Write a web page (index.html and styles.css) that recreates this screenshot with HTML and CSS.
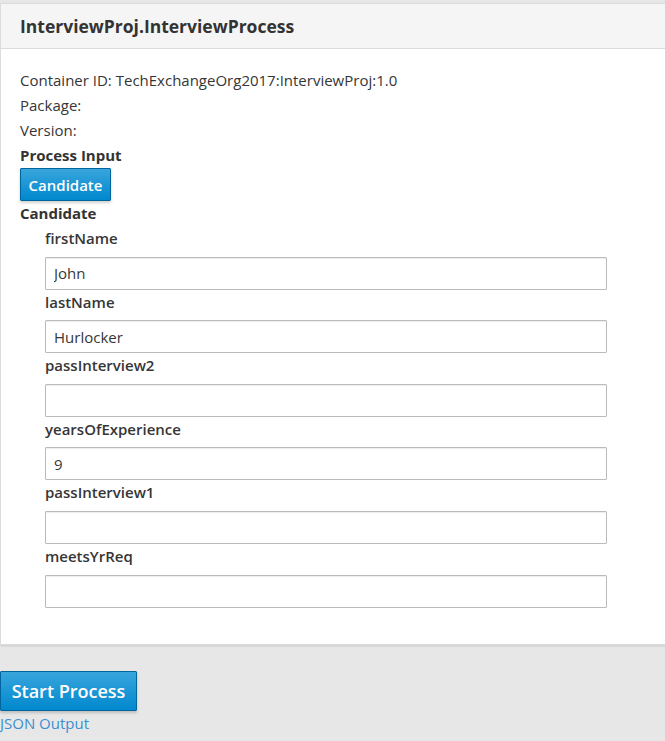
FILE: index.html
```html
<!DOCTYPE html>
<html>
<head>
<meta charset="utf-8">
<link rel="stylesheet" href="styles.css">
</head>
<body>
<div class="page">
  <div class="panel">
    <div class="panel-heading">InterviewProj.InterviewProcess</div>
    <div class="panel-body">
      <div class="line">Container ID: TechExchangeOrg2017:InterviewProj:1.0</div>
      <div class="line">Package:</div>
      <div class="line">Version:</div>
      <div class="line strong">Process Input</div>
      <button class="btn btn-small">Candidate</button>
      <div class="line strong">Candidate</div>
      <div class="fields">
        <div class="field"><label class="flabel">firstName</label><input class="input" type="text" value="John"></div>
        <div class="field"><label class="flabel">lastName</label><input class="input" type="text" value="Hurlocker"></div>
        <div class="field"><label class="flabel">passInterview2</label><input class="input" type="text" value=""></div>
        <div class="field"><label class="flabel">yearsOfExperience</label><input class="input" type="text" value="9"></div>
        <div class="field"><label class="flabel">passInterview1</label><input class="input" type="text" value=""></div>
        <div class="field"><label class="flabel">meetsYrReq</label><input class="input" type="text" value=""></div>
      </div>
    </div>
  </div>
  <div class="actions">
    <button class="btn btn-large">Start Process</button>
    <a class="link" href="#">JSON Output</a>
  </div>
</div>
</body>
</html>
```

FILE: styles.css
```css
html, body {
  margin: 0;
  padding: 0;
  background: #e7e7e7;
  font-family: "Open Sans", "Liberation Sans", sans-serif;
  color: #363636;
  font-size: 15px;
}
.page {
  padding-top: 3px;
  width: 665px;
  overflow: hidden;
}
.panel {
  background: #fff;
  border: 1px solid #dcdcdc;
  border-right: none;
  width: 680px;
  box-shadow: 0 1px 2px rgba(0,0,0,0.12);
}
.panel-heading {
  background: #f5f5f5;
  border-bottom: 1px solid #dcdcdc;
  height: 44px;
  line-height: 44px;
  padding-left: 19px;
  font-size: 17.5px;
  font-weight: 700;
  color: #333;
}
.panel-body {
  padding: 19px 0 36px 19px;
}
.line {
  line-height: 25px;
  height: 25px;
}
.strong {
  font-weight: 700;
  color: #333;
}
.btn {
  display: block;
  font-family: "Open Sans", "Liberation Sans", sans-serif;
  font-weight: 600;
  color: #fff;
  background: linear-gradient(to bottom, #39a5dc 0%, #0088ce 100%);
  border: 1px solid #00659c;
  border-radius: 1px;
  box-shadow: 0 2px 3px rgba(0,0,0,0.18);
  cursor: pointer;
}
.btn-small {
  font-size: 15px;
  height: 33px;
  padding: 0;
  margin: 0;
  width: 91px;
}
.fields {
  padding-left: 25px;
}
.field {
  display: flex;
  flex-direction: column;
  align-items: flex-start;
}
.flabel {
  display: block;
  font-weight: 600;
  line-height: 25px;
  height: 25px;
  margin-bottom: 5.6px;
}
.input {
  box-sizing: border-box;
  width: 562px;
  height: 33px;
  margin: 0;
  border: 1px solid #bbb;
  border-radius: 1px;
  padding: 0 8px;
  font-family: "Open Sans", "Liberation Sans", sans-serif;
  font-size: 15px;
  color: #363636;
  box-shadow: inset 0 1px 1px rgba(0,0,0,0.075);
  background: #fff;
}
.actions {
  padding-top: 26px;
}
.btn-large {
  font-size: 18px;
  height: 40px;
  width: 137px;
  padding: 0;
  margin: 0;
}
.link {
  display: block;
  color: #3b8fd1;
  text-decoration: none;
  line-height: 26px;
  margin-top: -1px;
  padding-left: 0;
}
```
